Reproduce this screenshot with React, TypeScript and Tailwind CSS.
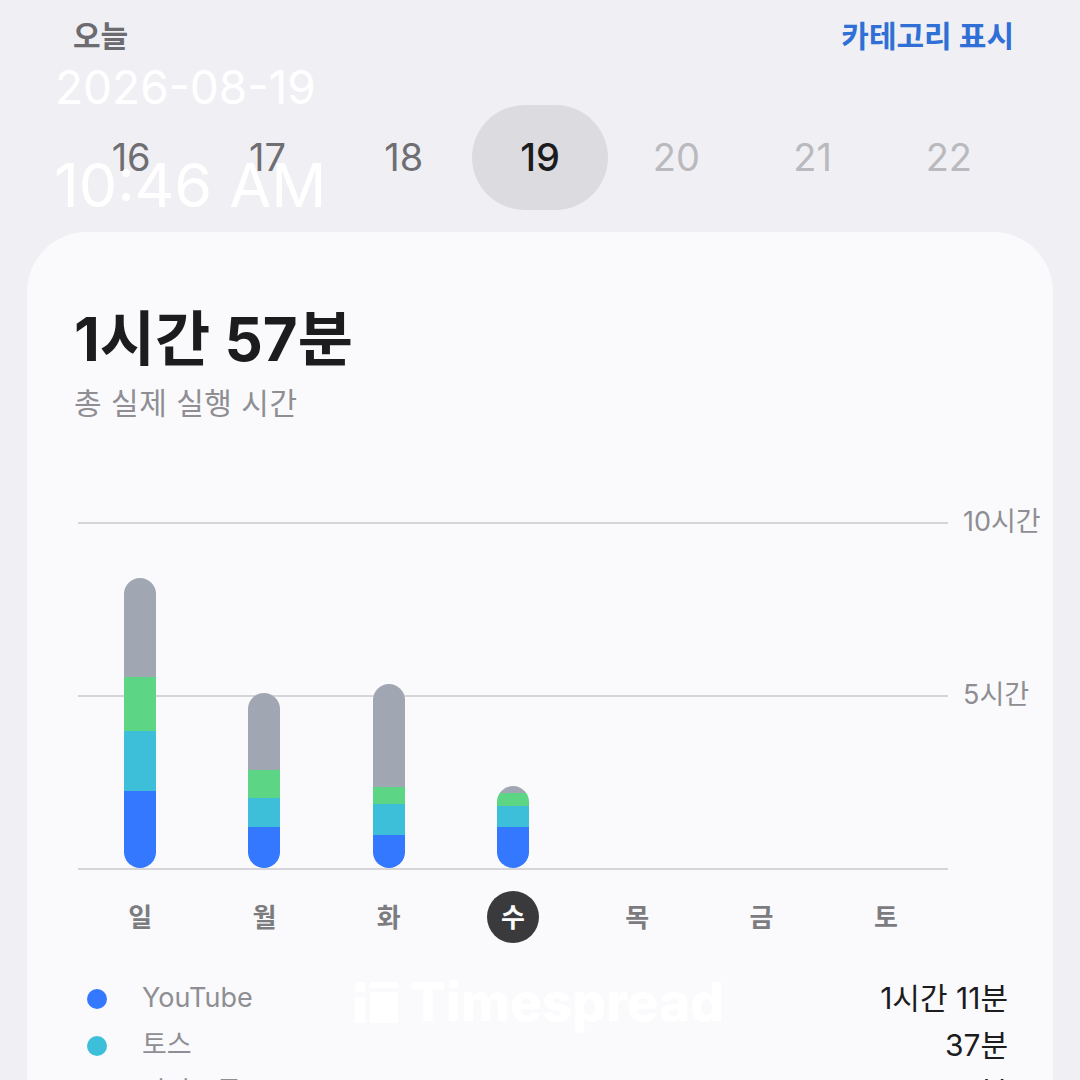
import React from "react";

const FONT = "font-['Inter','Noto_Sans_CJK_KR',sans-serif]";

type Seg = { gray: number; green: number; cyan: number; blue: number };
const bars: (Seg | null)[] = [
  { gray: 99, green: 54, cyan: 60, blue: 77 },
  { gray: 77, green: 28, cyan: 29, blue: 41 },
  { gray: 103, green: 17, cyan: 31, blue: 33 },
  { gray: 7, green: 13, cyan: 21, blue: 41 },
  null,
  null,
  null,
];

const days = ["일", "월", "화", "수", "목", "금", "토"];
const dates = [
  { n: "16", c: "text-[#6e6e73]" },
  { n: "17", c: "text-[#6e6e73]" },
  { n: "18", c: "text-[#6e6e73]" },
  { n: "19", c: "text-[#1c1c1e] font-medium" },
  { n: "20", c: "text-[#b9b9be]" },
  { n: "21", c: "text-[#b9b9be]" },
  { n: "22", c: "text-[#b9b9be]" },
];

export default function App() {
  return (
    <div className={`relative w-[1080px] h-[1080px] overflow-hidden bg-[#f0f0f4] ${FONT}`}>
      {/* header */}
      <div className="flex justify-between items-center pl-[73px] pr-[66px] pt-[16px] h-[56px]">
        <span className="text-[30px] leading-[40px] font-semibold text-[#6b6b70]">오늘</span>
        <span className="text-[30px] leading-[40px] font-bold text-[#2f6fd6]">카테고리 표시</span>
      </div>

      {/* date strip */}
      <div className="grid grid-cols-7 mx-[63px] mt-[49px] h-[105px]">
        {dates.map((d) => (
          <div
            key={d.n}
            className={`flex items-center justify-center text-[38px] ${d.c} ${
              d.n === "19" ? "bg-[#dcdce0] rounded-full" : ""
            }`}
          >
            {d.n}
          </div>
        ))}
      </div>

      {/* card */}
      <div className="mx-[27px] mt-[22px] rounded-t-[60px] bg-[#fafafc] h-[900px] pt-[74px]">
        <div className="pl-[47px]">
          <div className="text-[60px] leading-[66px] font-bold text-[#1c1c1e]">1시간 57분</div>
          <div className="mt-[12px] text-[30px] leading-[38px] text-[#8e8e93] tracking-[0.5px]">총 실제 실행 시간</div>
        </div>

        {/* chart */}
        <div className="relative ml-[51px] w-[870px] mt-[100px] h-[348px]">
          <div className="absolute left-0 right-0 top-0 h-[2px] bg-[#d6d6da]" />
          <div className="absolute left-0 right-0 top-[173px] h-[2px] bg-[#d6d6da]" />
          <div className="absolute left-0 right-0 bottom-0 h-[2px] bg-[#d6d6da]" />
          <div className="absolute left-[885px] top-[-17px] text-[27px] leading-[34px] text-[#8e8e93] whitespace-nowrap">10시간</div>
          <div className="absolute left-[885px] top-[156px] text-[27px] leading-[34px] text-[#8e8e93] whitespace-nowrap">5시간</div>
          <div className="absolute inset-0 bottom-[2px] grid grid-cols-7 items-end">
            {bars.map((b, i) => (
              <div key={i} className="flex justify-center items-end h-full">
                {b && (
                  <div className="w-[32px] rounded-full overflow-hidden flex flex-col">
                    <div className="bg-[#a0a7b3]" style={{ height: b.gray }} />
                    <div className="bg-[#5cd685]" style={{ height: b.green }} />
                    <div className="bg-[#3ebfd9]" style={{ height: b.cyan }} />
                    <div className="bg-[#3478ff]" style={{ height: b.blue }} />
                  </div>
                )}
              </div>
            ))}
          </div>
        </div>

        {/* day labels */}
        <div className="grid grid-cols-7 ml-[51px] w-[870px] mt-[21px]">
          {days.map((d) => (
            <div key={d} className="flex justify-center">
              {d === "수" ? (
                <div className="w-[52px] h-[52px] rounded-full bg-[#3a3a3c] text-white flex items-center justify-center text-[26px] font-semibold">
                  {d}
                </div>
              ) : (
                <div className="h-[52px] flex items-center text-[26px] font-semibold text-[#7c7c80]">{d}</div>
              )}
            </div>
          ))}
        </div>

        {/* legend */}
        <div className="mt-[32px] pl-[60px] pr-[45px] flex flex-col">
          {[
            { c: "bg-[#3478ff]", name: "YouTube", v: "1시간 11분" },
            { c: "bg-[#3ebfd9]", name: "토스", v: "37분" },
            { c: "bg-[#5cd685]", name: "카카오톡", v: "5분" },
          ].map((r) => (
            <div key={r.name} className="flex items-center h-[47px]">
              <div className={`w-[20px] h-[20px] rounded-full ${r.c}`} />
              <div className="ml-[35px] text-[27px] text-[#8e8e93] flex-1">{r.name}</div>
              <div className="text-[30px] text-[#1c1c1e]">{r.v}</div>
            </div>
          ))}
        </div>
      </div>

      {/* watermark logo */}
      <div className="absolute left-[355px] top-[974px] flex items-center gap-[12px] text-white">
        <svg width="43" height="41" viewBox="0 0 43 41" fill="white">
          <rect x="0" y="0" width="11" height="10" rx="4" />
          <rect x="0" y="15" width="10" height="26" />
          <rect x="15" y="0" width="28" height="6" />
          <rect x="15" y="10" width="28" height="31" />
        </svg>
        <span className="text-[53px] leading-[56px] font-extrabold font-['Inter',sans-serif]">Timespread</span>
      </div>

      {/* timestamp overlay */}
      <div className="absolute left-[55px] top-[60px] text-white font-['Inter',sans-serif] text-[46px] leading-[54px]">2026-08-19</div>
      <div className="absolute left-[54px] top-[150px] text-white font-['Inter',sans-serif] text-[61px] leading-[70px]">10:46 AM</div>
    </div>
  );
}
